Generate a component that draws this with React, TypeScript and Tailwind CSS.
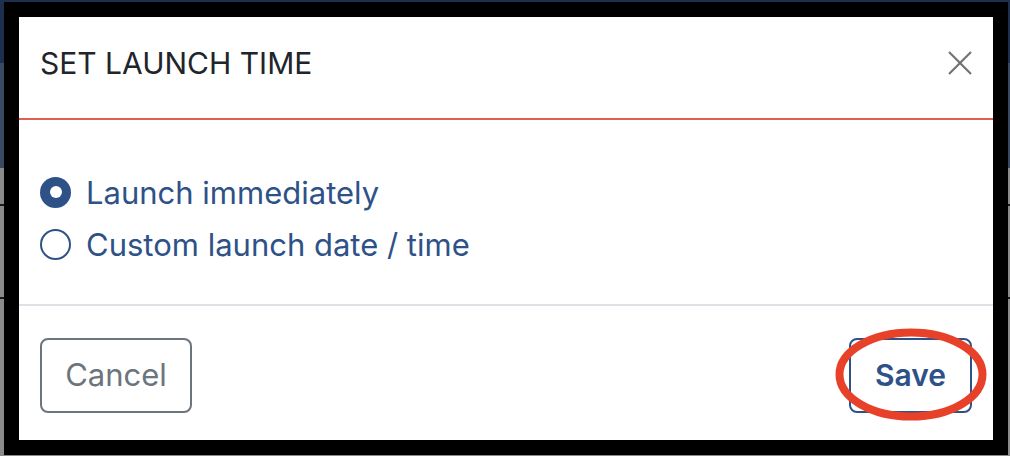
import { useState } from "react"

// Launch time options shown in the modal
const options = [
      { id: "now", label: "Launch immediately" },
      { id: "custom", label: "Custom launch date / time" },
]

const App = () => {
      const [selected, setSelected] = useState("now")

      return (
            <div className="h-[456px] w-[1010px] overflow-hidden bg-[linear-gradient(to_bottom,#1e2f4e_0,#1e2f4e_63px,#3a4962_63px,#3a4962_168px,#8b8b8b_168px,#8b8b8b_204px,#1a1a1a_204px,#1a1a1a_206px,#8b8b8b_206px,#8b8b8b_297px,#1a1a1a_297px,#1a1a1a_299px,#8b8b8b_299px)] pl-[4px] pt-[2px] font-['Inter',sans-serif]">
                  <div className="relative flex h-[453px] w-[1004px] flex-col border-[15px] border-black bg-white">
                        {/* Header */}
                        <div className="flex h-[103px] shrink-0 items-center justify-between border-b-2 border-[#e0604f] pb-[9px] pl-[21px] pr-[21px]">
                              <h2 className="text-[30px] leading-none text-[#212529]">SET LAUNCH TIME</h2>
                              <button className="flex h-[24px] w-[24px] items-center justify-center">
                                    <svg width="24" height="24" viewBox="0 0 24 24" fill="none" stroke="#727272" strokeWidth="2.2">
                                          <line x1="1" y1="1" x2="23" y2="23" />
                                          <line x1="23" y1="1" x2="1" y2="23" />
                                    </svg>
                              </button>
                        </div>

                        {/* Body */}
                        <div className="flex h-[186px] shrink-0 flex-col border-b-2 border-[#dee2e6] pl-[21px] pt-[46px]">
                              {options.map((opt) => (
                                    <RadioRow
                                          key={opt.id}
                                          label={opt.label}
                                          checked={selected === opt.id}
                                          onSelect={() => setSelected(opt.id)}
                                    />
                              ))}
                        </div>

                        {/* Footer */}
                        <div className="flex flex-1 items-start justify-between px-[21px] pt-[32px]">
                              <button className="h-[75px] w-[152px] rounded-[8px] border-2 border-[#6c757d] text-[31px] text-[#6c757d]">
                                    Cancel
                              </button>
                              <button className="h-[75px] w-[123px] rounded-[8px] border-2 border-[#2e5288] text-[30px] font-semibold text-[#2e5288]">
                                    Save
                              </button>
                        </div>

                        {/* Annotation ring round the Save button */}
                        <svg
                              className="pointer-events-none absolute left-[816px] top-[311px]"
                              width="152"
                              height="93"
                              viewBox="0 0 152 93"
                              fill="none"
                        >
                              <ellipse cx="76" cy="46.5" rx="71.5" ry="42" stroke="#e8412a" strokeWidth="8" />
                        </svg>
                  </div>
            </div>
      )
}

interface RadioRowProps {
      label: string
      checked: boolean
      onSelect: () => void
}

const RadioRow = ({ label, checked, onSelect }: RadioRowProps) => {
      return (
            <label className="flex h-[52px] cursor-pointer items-center gap-[15px]" onClick={onSelect}>
                  {checked ? (
                        <span className="flex h-[31px] w-[31px] items-center justify-center rounded-full bg-[#2e5288]">
                              <span className="h-[12px] w-[12px] rounded-full bg-white" />
                        </span>
                  ) : (
                        <span className="h-[31px] w-[31px] rounded-full border-2 border-[#2e5288] bg-white" />
                  )}
                  <span className="text-[31px] leading-none text-[#2e5288]">{label}</span>
            </label>
      )
}

export default App
